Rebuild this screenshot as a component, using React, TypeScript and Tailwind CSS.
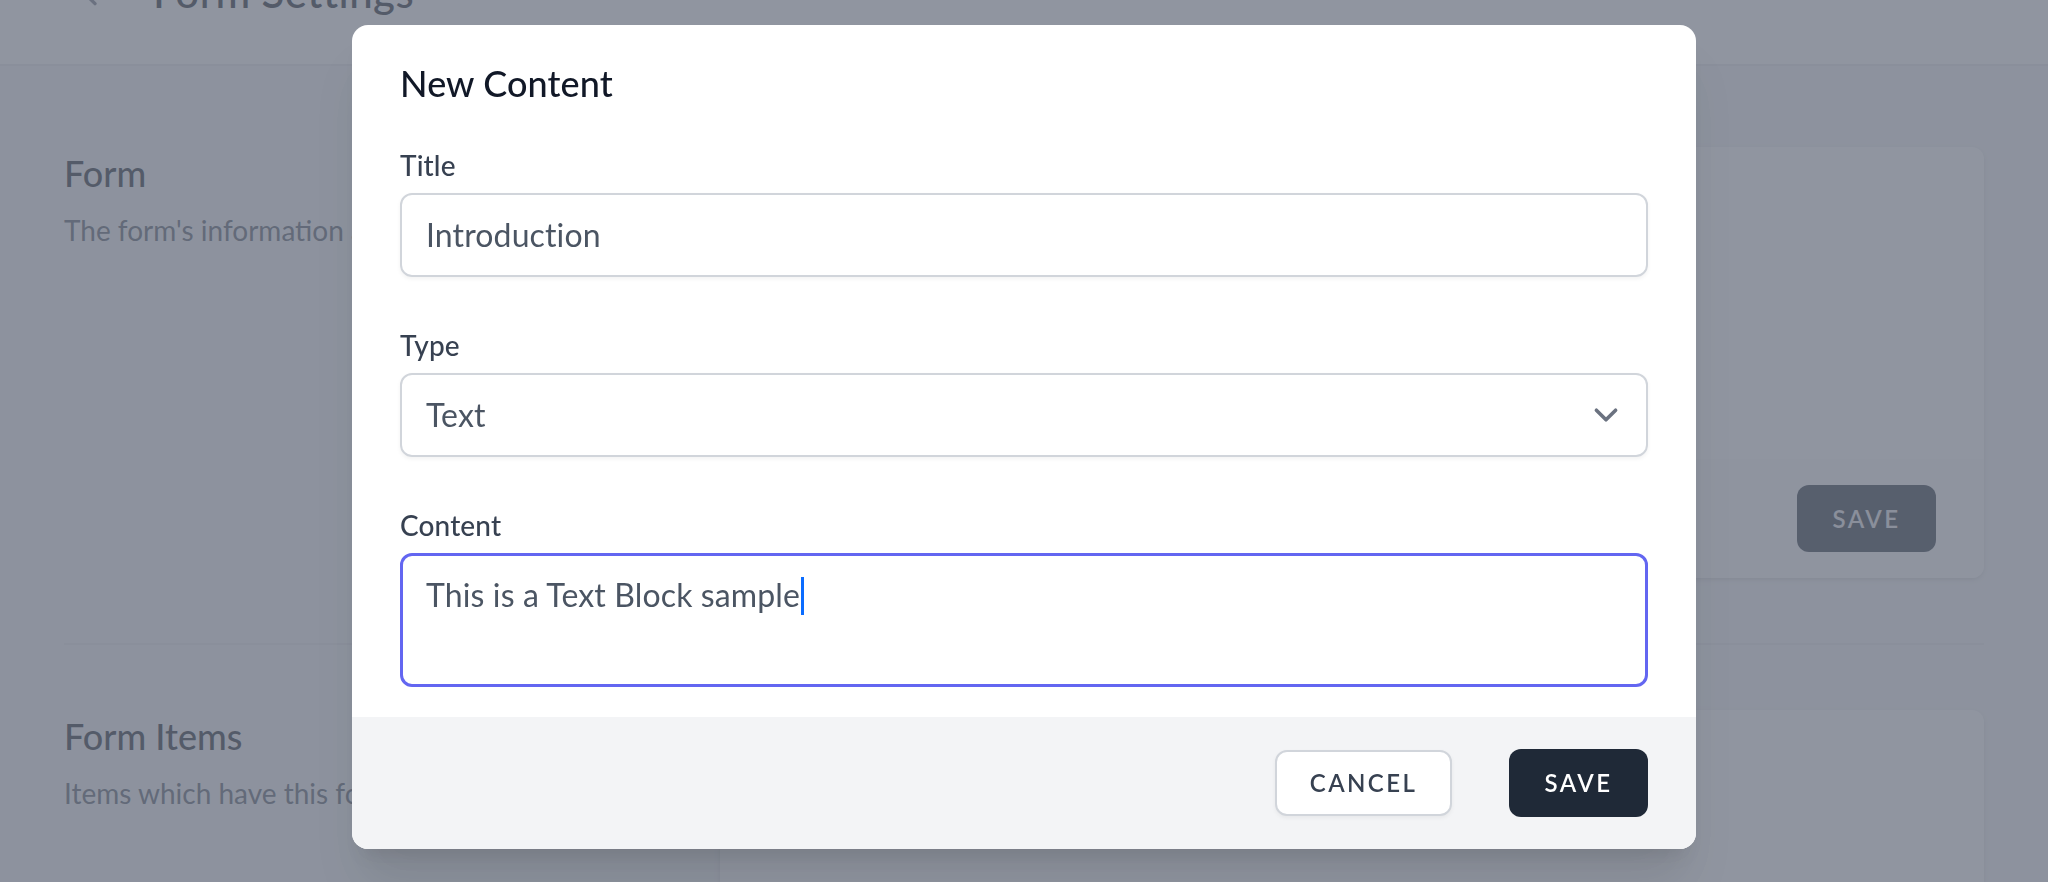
import React from "react";

function ChevronLeft() {
  return (
    <svg width="40" height="40" viewBox="0 0 24 24" fill="none" stroke="#6b7280" strokeWidth="2" strokeLinecap="round" strokeLinejoin="round">
      <path d="M15 19l-7-7 7-7" />
    </svg>
  );
}

function SelectChevron() {
  return (
    <svg width="48" height="48" viewBox="0 0 20 20" fill="none" stroke="#6b7280" strokeWidth="1.5" strokeLinecap="round" strokeLinejoin="round">
      <path d="M6 8l4 4 4-4" />
    </svg>
  );
}

export default function App() {
  return (
    <div className="relative h-[882px] overflow-hidden bg-[#f3f4f6] font-[Lato,sans-serif]">
      {/* Underlying page */}
      <header className="-mt-[84px] flex items-center border-b-2 border-[#e5e7eb] bg-white pl-[70px] pr-[64px] pt-[48px] pb-[44px]">
        <ChevronLeft />
        <h1 className="ml-[43px] text-[42px] leading-[56px] font-medium tracking-[0.01em] text-[#111827]">Form Settings</h1>
      </header>

      <main className="px-[64px] pt-[81px]">
        <div className="grid grid-cols-3 gap-x-[48px]">
          <div>
            <h3 className="text-[36px] leading-[52px] font-medium text-[#111827]">Form</h3>
            <p className="mt-[11px] text-[28px] leading-[40px] text-[#4b5563]">The form's information and settings.</p>
          </div>
          <div className="col-span-2 overflow-hidden rounded-[12px] bg-white shadow-[0_2px_6px_0_rgba(0,0,0,0.1),0_2px_4px_-2px_rgba(0,0,0,0.1)]">
            <div className="h-[312px]" />
            <div className="flex h-[119px] items-center justify-end bg-[#f9fafb] px-[48px]">
              <button className="flex h-[67px] w-[139px] items-center justify-center rounded-[12px] bg-[#1f2937] text-[24px] font-semibold tracking-[0.1em] text-[#e5e7eb]">
                SAVE
              </button>
            </div>
          </div>
        </div>

        <div className="py-[65px]">
          <div className="border-t-2 border-[#e5e7eb]" />
        </div>

        <div className="grid grid-cols-3 gap-x-[48px]">
          <div>
            <h3 className="text-[36px] leading-[52px] font-medium text-[#111827]">Form Items</h3>
            <p className="mt-[11px] text-[28px] leading-[40px] text-[#4b5563]">Items which have this form.</p>
          </div>
          <div className="col-span-2 h-[400px] rounded-[12px] bg-white shadow-[0_2px_6px_0_rgba(0,0,0,0.1),0_2px_4px_-2px_rgba(0,0,0,0.1)]" />
        </div>
      </main>

      {/* Overlay */}
      <div className="fixed inset-0 bg-[rgba(107,114,128,0.75)]" />

      {/* Modal */}
      <div className="fixed inset-0 flex items-start justify-center pt-[25px]">
        <div className="w-[1344px] overflow-hidden rounded-[16px] bg-white shadow-[0_40px_50px_-10px_rgba(0,0,0,0.1),0_16px_20px_-12px_rgba(0,0,0,0.1)]">
          <div className="px-[48px] pt-[32px] pb-[30px] tracking-[0.008em]">
            <h2 className="text-[36px] leading-[52px] font-medium text-[#111827]">New Content</h2>

            <div className="mt-[36px]">
              <label className="block text-[28px] leading-[40px] font-medium text-[#374151]">Title</label>
              <div className="mt-[8px] flex h-[84px] items-center rounded-[12px] border-2 border-[#d1d5db] px-[24px] text-[32px] leading-[48px] text-[#4b5563] shadow-[0_2px_4px_0_rgba(0,0,0,0.05)]">
                Introduction
              </div>
            </div>

            <div className="mt-[48px]">
              <label className="block text-[28px] leading-[40px] font-medium text-[#374151]">Type</label>
              <div className="mt-[8px] flex h-[84px] items-center justify-between rounded-[12px] border-2 border-[#d1d5db] pl-[24px] pr-[16px] text-[32px] leading-[48px] text-[#4b5563] shadow-[0_2px_4px_0_rgba(0,0,0,0.05)]">
                <span>Text</span>
                <SelectChevron />
              </div>
            </div>

            <div className="mt-[48px]">
              <label className="block text-[28px] leading-[40px] font-medium text-[#374151]">Content</label>
              <div className="mt-[8px] h-[134px] rounded-[12px] border-[3px] border-[#6366f1] pl-[23px] pt-[15px] text-[32px] leading-[48px] text-[#4b5563]">
                This is a Text Block sample
                <span className="ml-[1px] inline-block h-[38px] w-[3px] bg-[#0a6cff] align-[-8px]" />
              </div>
            </div>
          </div>

          <div className="flex h-[132px] items-center justify-end gap-[57px] bg-[#f3f4f6] px-[48px]">
            <button className="flex h-[66px] w-[177px] items-center justify-center rounded-[12px] border-2 border-[#d1d5db] bg-white text-[24px] font-semibold tracking-[0.1em] text-[#374151] shadow-[0_2px_4px_0_rgba(0,0,0,0.05)]">
              CANCEL
            </button>
            <button className="flex h-[68px] w-[139px] items-center justify-center rounded-[12px] bg-[#1f2937] text-[24px] font-semibold tracking-[0.1em] text-white">
              SAVE
            </button>
          </div>
        </div>
      </div>
    </div>
  );
}
